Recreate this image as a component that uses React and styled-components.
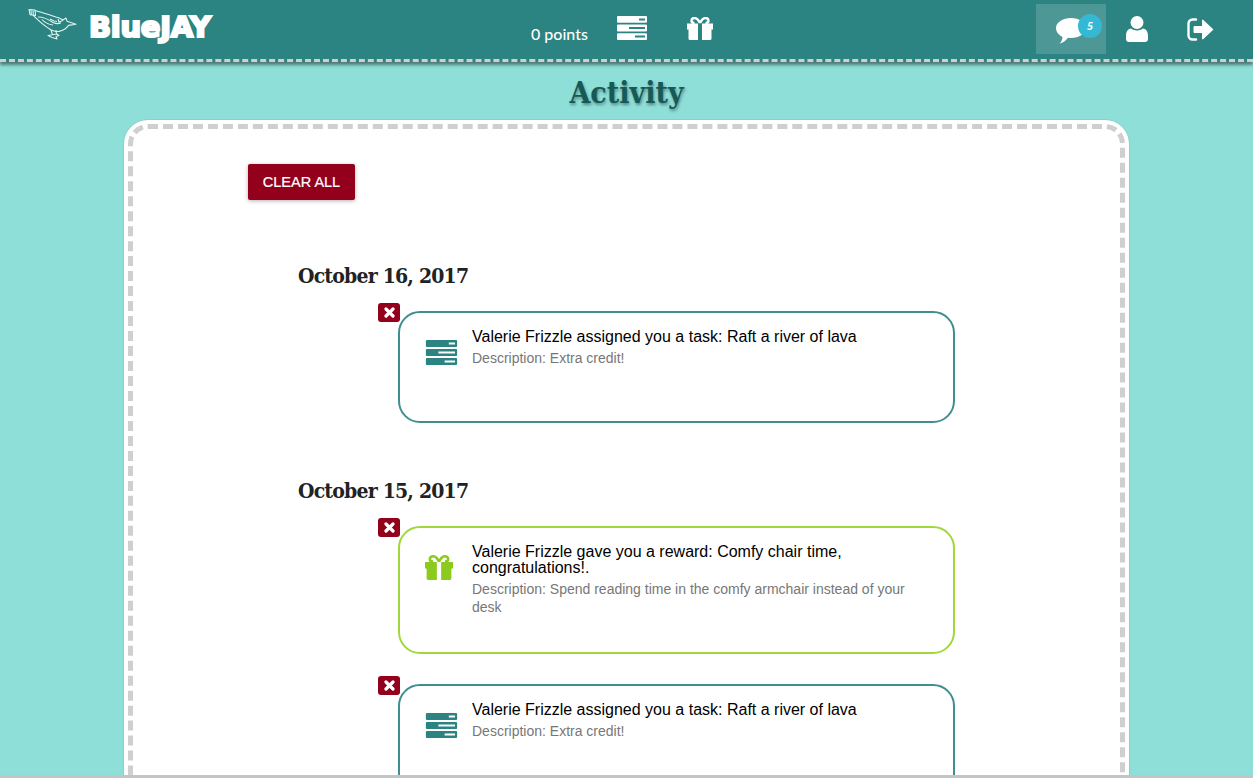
import React from "react";
import styled, { createGlobalStyle } from "styled-components";

const Global = createGlobalStyle`
  html, body { margin: 0; padding: 0; height: 100%; overflow: hidden; }
  body { font-family: "Liberation Sans", Arial, sans-serif; background: #8fdfd9; }
`;

const Page = styled.div`
  height: 100vh; display: flex; flex-direction: column; overflow: hidden;
`;
const Header = styled.header`
  flex: none; height: 59px; background: #2b8382; display: flex; align-items: flex-start;
  border-bottom: 3px dashed #cfcfcf; box-shadow: 0 3px 3px rgba(0,0,0,.45); position: relative; z-index: 2;
`;
const Brand = styled.div`
  width: 531px; flex: none; display: flex; align-items: flex-start; padding: 8px 0 0 28px; box-sizing: border-box; gap: 11px;
`;
const Wordmark = styled.span`
  font-family: "DejaVu Sans", sans-serif; font-weight: 700; font-size: 29px; line-height: 32px; color: #fff;
  -webkit-text-stroke: 2.2px #fff; letter-spacing: -0.3px; margin-top: 3px;
`;
const Points = styled.span`
  font-family: Lato, sans-serif; font-weight: 500; font-size: 16px; color: #fff; line-height: 20px; margin-top: 24px; width: 86px;
`;
const IconSlot = styled.span`
  display: flex; color: #fff; margin-top: ${p => p.$top}px; width: ${p => p.$w}px;
`;
const RightNav = styled.div`
  margin-left: auto; display: flex; align-items: flex-start; padding-right: 39px;
`;
const ChatTile = styled.div`
  width: 70px; height: 50px; margin-top: 4px; background: rgba(255,255,255,.16); position: relative; margin-right: 20px;
`;
const Bubble = styled.span`
  position: absolute; left: 20px; top: 14px; color: #fff; display: flex;
`;
const Badge = styled.span`
  position: absolute; left: 42px; top: 10px; width: 24px; height: 24px; border-radius: 50%; background: #35b8d3; color: #fff;
  font-family: Lato, sans-serif; font-weight: 900; font-style: italic; font-size: 11px; line-height: 24px; text-align: center;
`;
const Main = styled.main`
  flex: 1; min-height: 0; overflow: hidden; padding-top: 11px;
`;
const Title = styled.h1`
  margin: 0; text-align: center; font-family: "DejaVu Serif Condensed", "DejaVu Serif", serif; font-stretch: condensed; font-weight: 700; font-size: 30px; line-height: 40px;
  color: #165a58; text-shadow: 1px 2px 3px rgba(0,0,0,.4);
`;
const Sheet = styled.section`
  margin: 11px 0 0 128px; width: 997px; box-sizing: border-box; min-height: 900px; background: #fff;
  border: 5px dashed #cfcfcf; border-radius: 20px; box-shadow: 0 0 0 4px #fff, 0 0 0 5px rgba(0,0,0,.06);
  padding: 35px 0 0 115px;
`;
const ClearButton = styled.button`
  display: block; width: 107px; height: 36px; border: 0; border-radius: 2px; background: #93001c; color: #fff; padding: 0;
  font-family: "Liberation Sans", Arial, sans-serif; font-size: 14.500px; -webkit-text-stroke: .2px #fff; box-shadow: 0 1px 4px rgba(0,0,0,.3);
`;
const DayHeading = styled.h2`
  margin: ${p => p.$first ? 62 : 54}px 0 0 50px; font-family: "DejaVu Serif Condensed", "DejaVu Serif", serif; font-stretch: condensed; font-weight: 700; font-size: 21px; line-height: 28px;
  letter-spacing: -0.8px; color: #222;
`;
const Item = styled.article`
  position: relative; margin: ${p => p.$first ? 21 : 30}px 0 0 150px; width: 557px; height: ${p => p.$h}px; box-sizing: border-box;
  border: 2px solid ${p => p.$color}; border-radius: 22px; background: #fff; display: flex; padding: 16px 44px 0 25px;
`;
const Remove = styled.span`
  position: absolute; left: -22px; top: -10px; width: 22px; height: 19px; border-radius: 3px; background: #93001c; color: #fff;
  display: flex; align-items: center; justify-content: center;
`;
const ItemIcon = styled.span`
  flex: none; width: 47px; display: flex; margin-top: 11px; color: ${p => p.$color};
`;
const ItemBody = styled.div`
  min-width: 0; flex: 1;
`;
const ItemTitle = styled.div`
  font-size: 16px; line-height: 16px; color: #000;
`;
const ItemDesc = styled.div`
  margin-top: 4px; font-size: 14px; line-height: 18px; color: #777;
`;
const Bottom = styled.div`
  flex: none; height: 3px; background: #c4c4c4; position: relative; z-index: 2;
`;

const ServerIcon = ({ w = 30, h = 24 }) => (
  <svg width={w} height={h} viewBox="0 0 30 24" fill="currentColor" fillRule="evenodd">
    <path d="M1 0h28a1 1 0 0 1 1 1v4.800a1 1 0 0 1-1 1H1a1 1 0 0 1-1-1V1a1 1 0 0 1 1-1zM22 2.400v2h6v-2z" />
    <path d="M1 8.600h28a1 1 0 0 1 1 1v4.800a1 1 0 0 1-1 1H1a1 1 0 0 1-1-1V9.600a1 1 0 0 1 1-1zM12 11v2h16v-2z" />
    <path d="M1 17.200h28a1 1 0 0 1 1 1V23a1 1 0 0 1-1 1H1a1 1 0 0 1-1-1v-4.800a1 1 0 0 1 1-1zM18 19.600v2h10v-2z" />
  </svg>
);
const GiftIcon = ({ w = 26, h = 23 }) => (
  <svg width={w} height={h} viewBox="0 0 26 23" fill="currentColor">
    <path d="M0 6.500h11V12.500H0zM15 6.500H26V12.500H15zM1.500 12.500h9.500V23H3a1.500 1.500 0 0 1-1.500-1.500zM15 12.500h9.500v9A1.500 1.500 0 0 1 23 23h-8z" />
    <path d="M13 6C11 2 9 1 7.500 1 5.500 1 4.500 2.500 4.500 3.800 4.500 5.200 5.700 6 7.500 6M13 6c2-4 4-5 5.500-5 2 0 3 1.500 3 2.800 0 1.400-1.200 2.200-3 2.200" fill="none" stroke="currentColor" strokeWidth="2.400" />
  </svg>
);
const CommentIcon = () => (
  <svg width="30" height="26" viewBox="0 0 30 26" fill="currentColor">
    <path d="M15 0c8.300 0 15 4.500 15 10s-6.700 10-15 10c-1 0-2-.1-3-.2C9.800 22.500 7 25 3.600 25.800c1.500-1.800 2.600-3.700 3-6.900C2.600 17.100 0 13.800 0 10 0 4.500 6.700 0 15 0z" />
  </svg>
);
const UserIcon = () => (
  <svg width="22" height="26" viewBox="0 0 22 26" fill="currentColor">
    <circle cx="11" cy="6.500" r="6.500" />
    <path d="M5 12.500c1.600 1.300 3.700 2 6 2s4.400-.7 6-2c3 .4 5 3 5 7.500v3c0 1.700-1.300 3-3 3H3c-1.700 0-3-1.300-3-3v-3c0-4.500 2-7.100 5-7.500z" />
  </svg>
);
const SignOutIcon = () => (
  <svg width="27" height="23" viewBox="0 0 27 23" fill="none">
    <path d="M9 1.500H5.500A4 4 0 0 0 1.500 5.500v12a4 4 0 0 0 4 4H9" stroke="currentColor" strokeWidth="2.400" strokeLinecap="round" />
    <path d="M7.500 8H15V2.500a.8.800 0 0 1 1.400-.6L26.500 11.500 16.400 21.100a.8.800 0 0 1-1.400-.6V15H7.500a1 1 0 0 1-1-1V9a1 1 0 0 1 1-1z" fill="currentColor" />
  </svg>
);
const BirdLogo = () => (
  <svg width="50" height="32" viewBox="0 0 50 32" fill="none" stroke="#dff3f1" strokeWidth="1.100" strokeLinejoin="round">
    <path d="M1 1.500 7 2l.5 5.500-5.500-.8zM3 2l.3 4.500M5 2.200l.3 4.600" />
    <path d="M7 2.500c6 1.500 13 4 21 6.500 3 .4 5 1.700 7 3l3-2 1 3.200 9 3-7.500 1.200c-2 3-5 5-9.500 6-4 .5-8-1-11-3.500C13.500 16 9 11 5 7.200" />
    <path d="M10 9c5 0 10 2 15 5.500 3 1.500 6 1.300 8 .3M14 11.500c3 3.500 7 5 11 5.500M22 11l4 2 3 .5M30 11l1 3 4-1.500" />
    <path d="M23 22l1.500 5M28 22l.5 4.500M20 27.500l9-1.500 2 1.500-3 1 1 2.500-5-1.500-3-1.500z" />
  </svg>
);
const CrossIcon = () => (
  <svg width="11" height="11" viewBox="0 0 11 11" stroke="currentColor" strokeWidth="3.200" strokeLinecap="round">
    <path d="M2 2l7 7M9 2l-7 7" />
  </svg>
);

const TASK = "#3f8f8e";
const REWARD = "#a0d83a";

const Notification = ({ kind, first, height, title, desc }) => {
  const isTask = kind === "task";
  return (
    <Item $first={first} $h={height} $color={isTask ? TASK : REWARD}>
      <Remove><CrossIcon /></Remove>
      <ItemIcon $color={isTask ? "#2b8382" : "#8ccb1e"}>
        {isTask ? <ServerIcon w={33} h={25} /> : <GiftIcon w={28} h={25} />}
      </ItemIcon>
      <ItemBody>
        <ItemTitle>{title}</ItemTitle>
        <ItemDesc>{desc}</ItemDesc>
      </ItemBody>
    </Item>
  );
};

export default function App() {
  return (
    <Page>
      <Global />
      <Header>
        <Brand>
          <BirdLogo />
          <Wordmark>BlueJAY</Wordmark>
        </Brand>
        <Points>0 points</Points>
        <IconSlot $top={16} $w={70}><ServerIcon /></IconSlot>
        <IconSlot $top={17} $w={26}><GiftIcon /></IconSlot>
        <RightNav>
          <ChatTile>
            <Bubble><CommentIcon /></Bubble>
            <Badge>5</Badge>
          </ChatTile>
          <IconSlot $top={16} $w={61}><UserIcon /></IconSlot>
          <IconSlot $top={18} $w={27}><SignOutIcon /></IconSlot>
        </RightNav>
      </Header>
      <Main>
        <Title>Activity</Title>
        <Sheet>
          <ClearButton>CLEAR ALL</ClearButton>
          <DayHeading $first>October 16, 2017</DayHeading>
          <Notification kind="task" first height={112} title="Valerie Frizzle assigned you a task: Raft a river of lava" desc="Description: Extra credit!" />
          <DayHeading>October 15, 2017</DayHeading>
          <Notification kind="reward" first height={128} title="Valerie Frizzle gave you a reward: Comfy chair time, congratulations!." desc="Description: Spend reading time in the comfy armchair instead of your desk" />
          <Notification kind="task" height={112} title="Valerie Frizzle assigned you a task: Raft a river of lava" desc="Description: Extra credit!" />
        </Sheet>
      </Main>
      <Bottom />
    </Page>
  );
}
